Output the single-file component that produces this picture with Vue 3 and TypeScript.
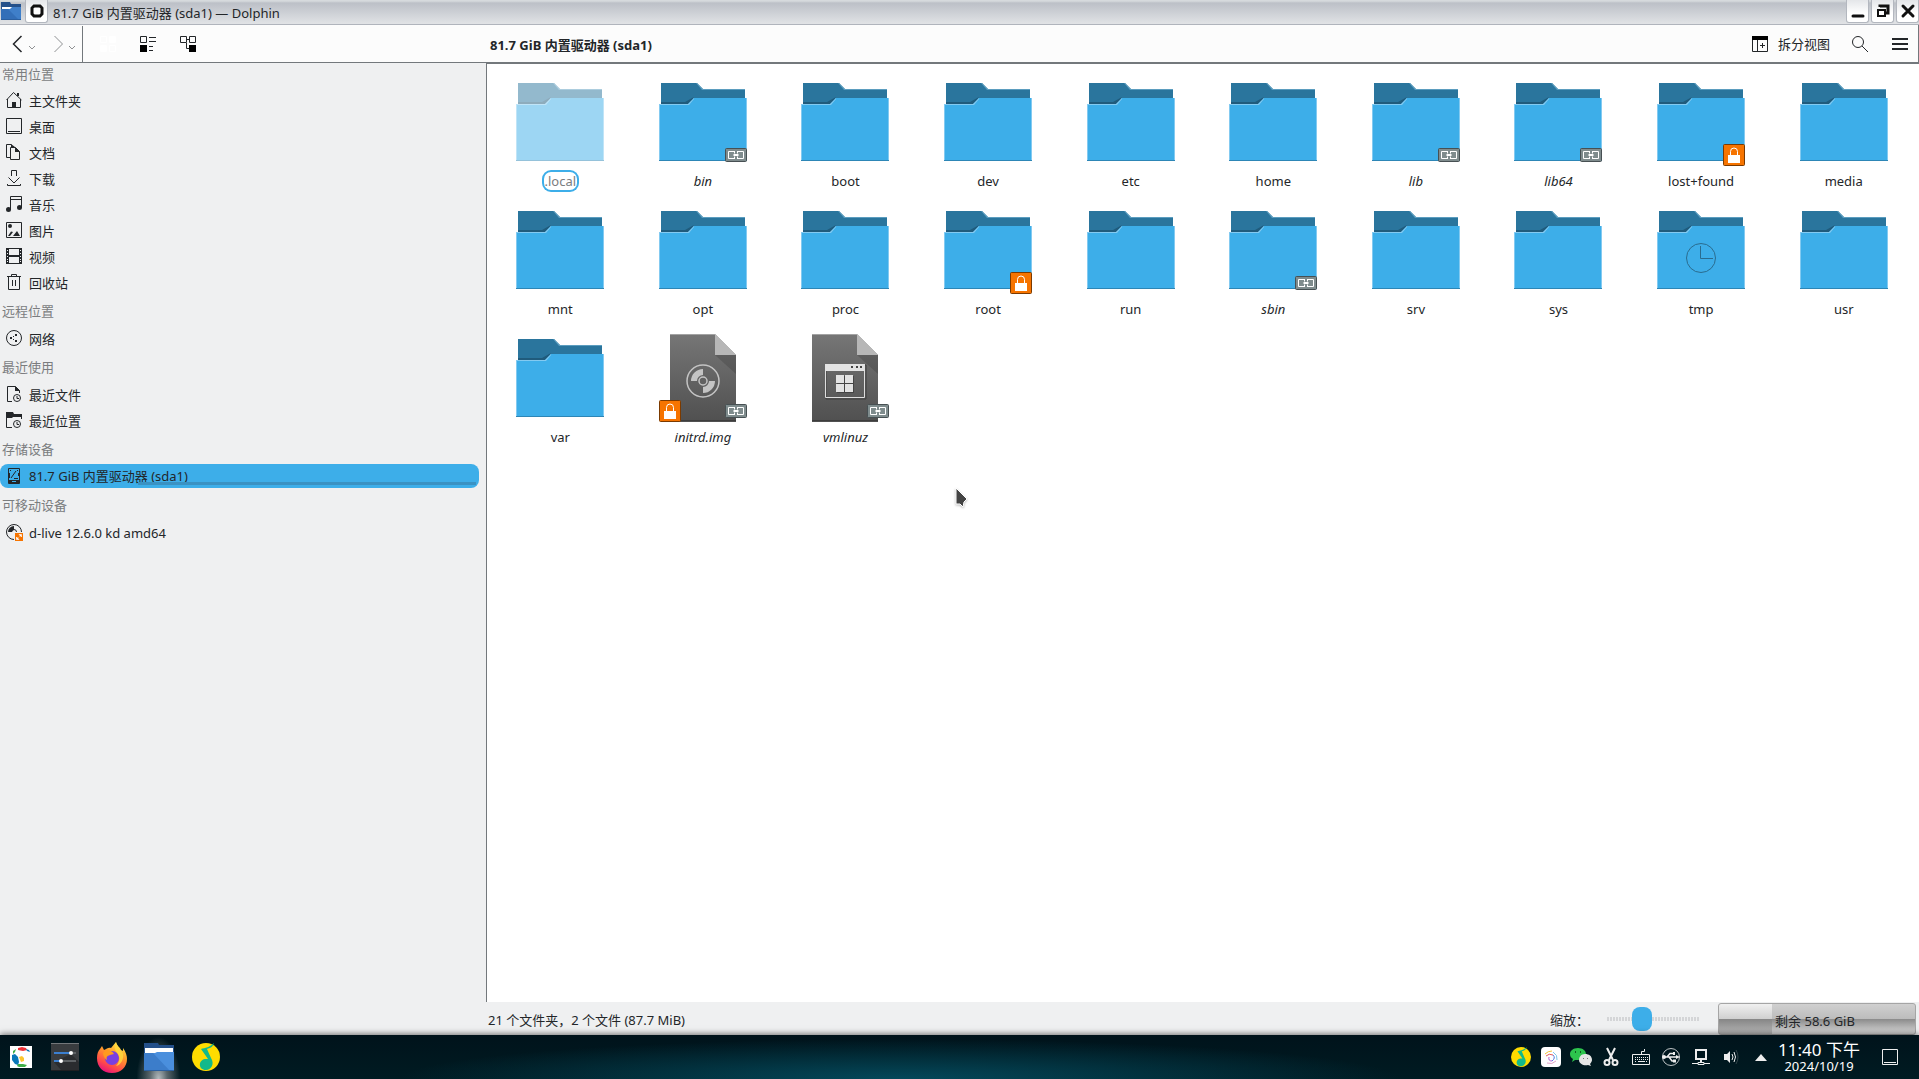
<script setup lang="ts">
import { ref } from 'vue'

interface Place {
  label: string
  stroke: string
  fill: string
  active?: boolean
  usage?: number
  mounted?: boolean
}
interface Section {
  title: string
  places: Place[]
}
interface Entry {
  name: string
  kind?: 'folder' | 'disc' | 'app'
  link?: boolean
  lock?: boolean
  hidden?: boolean
  clock?: boolean
}

const zoomLevel = ref(35)

const clockBadge = 'M7.5 12a3.5 3.5 0 1 0 7 0a3.5 3.5 0 1 0 -7 0M11 10v2.5h2'

const sections: Section[] = [
  {
    title: '常用位置',
    places: [
      { label: '主文件夹', stroke: 'M1.5 7V15.5H14.5V7M.5 8L7.5 .5L15.5 8', fill: 'M6 10h4v5H6zM11 1h2v3h-2z' },
      { label: '桌面', stroke: 'M.5 .5H15.5V15.5H.5zM2 13.5H14', fill: '' },
      { label: '文档', stroke: 'M4 13.5H.5V.5H5.5M4.5 3.5H9.5L13.5 7.5V15.5H4.5z', fill: 'M9 3v5h5zM5 0l4 3H5z' },
      { label: '下载', stroke: 'M5.5 6V.5H10.5V6M2.5 7.5L8 13L13.5 7.5M1.5 14V15.5H14.5V14', fill: '' },
      {
        label: '音乐',
        stroke: 'M4.5 14V.5H15.5V12M4.5 3.5H15.5',
        fill: 'M0 13.5a2.5 2.5 0 1 0 5 0a2.5 2.5 0 1 0 -5 0M11 11.5a2.5 2.5 0 1 0 5 0a2.5 2.5 0 1 0 -5 0',
      },
      {
        label: '图片',
        stroke: 'M.5 .5H15.5V15.5H.5z',
        fill: 'M2 4a2 2 0 1 0 4 0a2 2 0 1 0 -4 0M7 14l4-5l3 5zM2 14l3-4.5l2 .5l-3 4z',
      },
      {
        label: '视频',
        stroke: 'M.5 .5H15.5V15.5H.5z',
        fill: 'M0 0H3V16H0zM1 2v1h1v-1zM1 5v1h1v-1zM1 8v1h1v-1zM1 11v1h1v-1zM1 13v1h1v-1zM13 0H16V16H13zM14 2v1h1v-1zM14 5v1h1v-1zM14 8v1h1v-1zM14 11v1h1v-1zM14 13v1h1v-1zM3 7h10v2H3z',
      },
      { label: '回收站', stroke: 'M1 2.5H15M5.5 2.5V.5H10.5V2.5M2.5 2.5V15.5H13.5V2.5M6.5 6V12M9.5 6V12', fill: '' },
    ],
  },
  {
    title: '远程位置',
    places: [
      {
        label: '网络',
        stroke: 'M.5 8a7.5 7.5 0 1 0 15 0a7.5 7.5 0 1 0 -15 0',
        fill: 'M4 7h2v2H4zM9 4h2v2H9zM9 10h2v2H9zM7 6h1v1H7zM7 9h1v1H7z',
      },
    ],
  },
  {
    title: '最近使用',
    places: [
      { label: '最近文件', stroke: 'M6 15.5H1.5V.5H9.5L13.5 4.5V7' + clockBadge, fill: 'M9 0v5h5z' },
      { label: '最近位置', stroke: 'M.5 5V15.5H6M15.5 4V7' + clockBadge, fill: 'M0 0H7L8 2H16V5H7L6 6H0z' },
    ],
  },
  {
    title: '存储设备',
    places: [
      {
        label: '81.7 GiB 内置驱动器 (sda1)',
        stroke: 'M2.5 .5H13.5V15.5H2.5zM5 10L10 3M8 10.5h4M4 2.5h1M11 2.5h1',
        fill: 'M3 12h10v4H3zM6 13v1h4v-1zM3 5h1v5H3zM12 5h1v3h-1z',
        active: true,
        usage: 28,
      },
    ],
  },
  {
    title: '可移动设备',
    places: [
      {
        label: 'd-live 12.6.0 kd amd64',
        stroke: 'M8 15.5A7.5 7.5 0 1 1 15.5 8M5.5 8a2.5 2.5 0 1 1 5 0',
        fill: 'M2 8A6 6 0 0 1 8 2V6A2 2 0 0 0 6 8z',
        mounted: true,
      },
    ],
  },
]

const entries: Entry[] = [
  { name: '.local', hidden: true },
  { name: 'bin', link: true },
  { name: 'boot' },
  { name: 'dev' },
  { name: 'etc' },
  { name: 'home' },
  { name: 'lib', link: true },
  { name: 'lib64', link: true },
  { name: 'lost+found', lock: true },
  { name: 'media' },
  { name: 'mnt' },
  { name: 'opt' },
  { name: 'proc' },
  { name: 'root', lock: true },
  { name: 'run' },
  { name: 'sbin', link: true },
  { name: 'srv' },
  { name: 'sys' },
  { name: 'tmp', clock: true },
  { name: 'usr' },
  { name: 'var' },
  { name: 'initrd.img', kind: 'disc', link: true, lock: true },
  { name: 'vmlinuz', kind: 'app', link: true },
]
</script>

<template>
  <div class="screen">
    <header class="titlebar">
      <svg class="app-icon" width="20" height="20" viewBox="0 0 20 20">
        <path d="M0 1H9L10 3H20V9H0z" fill="#24508a" />
        <path d="M1 6H19V9H1z" fill="#fff" />
        <path d="M0 8H9L11 6L20 6V19H0z" fill="#3f7fc9" />
        <path d="M0 8H7L18 19H0z" fill="#336fb8" />
        <path d="M0 18H20V19H0z" fill="#2b5f9f" />
      </svg>
      <button class="win-btn" aria-label="窗口菜单">
        <svg width="16" height="16" viewBox="0 0 16 16">
          <path d="M5 3H11L13 5V11L11 13H5L3 11V5z" fill="#fff" stroke="#111" stroke-width="3" />
        </svg>
      </button>
      <h1>81.7 GiB 内置驱动器 (sda1) — Dolphin</h1>
      <div class="win-controls">
        <button class="win-btn" aria-label="最小化">
          <svg width="16" height="16" viewBox="0 0 16 16"><path d="M3 13H13" stroke="#111" stroke-width="3" stroke-linecap="round" /></svg>
        </button>
        <button class="win-btn" aria-label="还原">
          <svg width="16" height="16" viewBox="0 0 16 16" fill="none" stroke="#111">
            <path d="M5 4V3H13V10H11" stroke-width="3" />
            <path d="M3 7H10V13H3z" stroke-width="2" />
          </svg>
        </button>
        <button class="win-btn" aria-label="关闭">
          <svg width="16" height="16" viewBox="0 0 16 16"><path d="M3 3L13 13M13 3L3 13" stroke="#111" stroke-width="3" stroke-linecap="round" /></svg>
        </button>
      </div>
    </header>

    <nav class="toolbar">
      <div class="history">
        <button class="tool" aria-label="后退">
          <svg width="24" height="16" viewBox="0 0 24 16">
            <path d="M9.500 0L1.500 8L9.500 16" class="line" /><path d="M17 10L20 13L23 10" class="faint" />
          </svg>
        </button>
        <button class="tool" aria-label="前进">
          <svg width="24" height="16" viewBox="0 0 24 16">
            <path d="M2.500 0L10.500 8L2.500 16" class="faint" /><path d="M17 10L20 13L23 10" class="faint" />
          </svg>
        </button>
      </div>
      <div class="modes">
        <button class="tool" aria-label="图标">
          <svg width="16" height="16" viewBox="0 0 16 16" fill="#fff" stroke="#fff">
            <path d="M.5 .5h6v6h-6zM9.500 9.500h6v6h-6z" fill="none" /><path d="M9.500 .5h6v6h-6zM.5 9.500h6v6h-6z" />
          </svg>
        </button>
        <button class="tool" aria-label="紧凑">
          <svg width="16" height="16" viewBox="0 0 16 16">
            <path d="M.5 .5h6v6h-6zM9 1.500h7M9 5.500h7M9 10.500h4M9 14.500h4" class="line" /><path d="M0 9h7v7H0z" />
          </svg>
        </button>
        <button class="tool" aria-label="详情">
          <svg width="16" height="16" viewBox="0 0 16 16">
            <path d="M.5 .5h6v6h-6zM9.500 .5h6v6h-6zM7 3.500h2M6.500 7V12.500H9" class="line" /><path d="M9 9h7v7H9z" />
          </svg>
        </button>
      </div>
      <strong class="crumb">81.7 GiB 内置驱动器 (sda1)</strong>
      <div class="actions">
        <button class="tool split">
          <svg width="16" height="16" viewBox="0 0 16 16">
            <path d="M.5 .5h15v15H.5zM5.500 4V15M8 9.500h5M10.500 7v5" class="line" /><path d="M0 0h16v4H0z" />
          </svg>
          <span>拆分视图</span>
        </button>
        <button class="tool" aria-label="搜索">
          <svg width="16" height="16" viewBox="0 0 16 16"><circle cx="6" cy="6" r="5.500" class="line" /><path d="M10 10L16 16" class="line" /></svg>
        </button>
        <button class="tool" aria-label="菜单">
          <svg width="16" height="16" viewBox="0 0 16 16"><path d="M0 2h16v2H0zM0 7h16v2H0zM0 12h16v2H0z" fill="#232629" /></svg>
        </button>
      </div>
    </nav>

    <div class="body">
      <aside class="places">
        <section v-for="s in sections" :key="s.title">
          <h2>{{ s.title }}</h2>
          <ul>
            <li v-for="p in s.places" :key="p.label">
              <a href="#" class="place" :class="{ active: p.active }">
                <svg width="16" height="16" viewBox="0 0 16 16">
                  <path :d="p.stroke" class="line" />
                  <path :d="p.fill" fill="#232629" fill-rule="evenodd" />
                  <g v-if="p.mounted">
                    <path d="M9 9h8v8H9z" fill="#f67400" />
                    <path d="M11 15l1.500-1.500M13.500 12.500L15 11M10.500 13v2.500H13zM13 10.500h2.500V13z" stroke="#fff" fill="#fff" stroke-width=".6" />
                  </g>
                </svg>
                <span>{{ p.label }}</span>
                <i v-if="p.usage" class="usage" :style="{ '--used': p.usage + '%' }"></i>
              </a>
            </li>
          </ul>
        </section>
      </aside>

      <div class="content">
        <main class="view">
          <figure v-for="e in entries" :key="e.name" class="entry" :class="{ dim: e.hidden, link: e.link }">
            <svg width="96" height="96" viewBox="0 0 96 96">
              <g v-if="!e.kind" class="folder">
                <path d="M6 9H42L48 15H90V40H6z" fill="#2a759d" />
                <path d="M42 9L48 15H90V16H47L41 9z" fill="#5b9dbf" />
                <path d="M6 28H30L39 23L34 30H6z" fill="#205b7c" />
                <path d="M4 30H33L39 24H92V87H4z" fill="#3daee9" />
                <path d="M4 30H33L39 24V25L34 31H5V86H4zM91 24H92V86H91z" fill="#83caf1" />
                <path d="M4 86H92V87H4z" fill="#2d86b6" />
                <g v-if="e.clock" fill="none" stroke="#2a6c8f"><circle cx="48" cy="56" r="14.500" /><path d="M47.500 44V56.500H60" /></g>
              </g>
              <g v-else>
                <path d="M15 4H60L81 25V92H15z" fill="url(#paper)" />
                <path d="M60 25H81V44z" fill="#000" opacity=".14" />
                <path d="M60 4L81 25H60z" fill="#b7b7b7" />
                <path d="M15 4H60V5H15z" fill="#a3a3a3" />
                <path d="M15 90H81V91H15z" fill="#3d3d3d" />
                <g v-if="e.kind === 'disc'" fill="none" stroke="#c4c4c4">
                  <circle cx="48" cy="51" r="16" stroke-width="1.500" />
                  <circle cx="48" cy="51" r="4" stroke-width="1.500" />
                  <path d="M39 51a9 9 0 0 1 9-9M57 51a9 9 0 0 1-9 9" stroke-width="6" />
                </g>
                <g v-else>
                  <path d="M29 35H69V69H29z" fill="none" stroke="#3f3f3f" />
                  <path d="M28.500 34.500H67.500V67.500H28.500z" fill="none" stroke="#dedede" />
                  <path d="M28 34H68V41H28z" fill="#e3e3e3" />
                  <path d="M54 36h2v2h-2zM59 36h2v2h-2zM63 36h2v2h-2z" fill="#444" />
                  <path d="M40 46h17v17H40z" fill="#454545" />
                  <path d="M39 45h8v8h-8zM48 45h8v8h-8zM39 54h8v8h-8zM48 54h8v8h-8z" fill="#e3e3e3" />
                </g>
              </g>
              <g v-if="e.lock" :transform="e.kind ? 'translate(4 70)' : 'translate(70 70)'">
                <rect x=".5" y=".5" width="21" height="21" rx="1" fill="#f67400" stroke="#7b3a00" />
                <path d="M7.500 11V7.500a3.500 3.500 0 0 1 7 0V11" fill="none" stroke="#fff" />
                <path d="M5 11h12v8H5z" fill="#fff" />
              </g>
              <g v-if="e.link" transform="translate(70 74)">
                <rect x=".5" y=".5" width="21" height="13" rx="1" fill="#7f8c8d" stroke="#475053" />
                <path d="M9 3.500H3.500V10.500H9M13 3.500H18.500V10.500H13M9.500 3V5M9.500 9V11M12.500 3V5M12.500 9V11" fill="none" stroke="#fff" />
                <path d="M8 7l2-2v1h2V5l2 2-2 2V8h-2v1z" fill="#fff" />
              </g>
            </svg>
            <figcaption><span>{{ e.name }}</span></figcaption>
          </figure>
          <svg class="pointer" width="14" height="22" viewBox="0 0 14 22">
            <path d="M1 1V17H5L8 20L9 15L12 12z" fill="#444" stroke="#fff" />
          </svg>
        </main>

        <footer class="status">
          <span class="summary">21 个文件夹，2 个文件 (87.7 MiB)</span>
          <label for="zoom">缩放：</label>
          <input id="zoom" v-model="zoomLevel" type="range" min="0" max="100" />
          <div class="capacity"><span>剩余 58.6 GiB</span></div>
        </footer>
      </div>
    </div>

    <div class="panel">
      <div class="launchers">
        <button class="task start" aria-label="启动器">
          <svg width="22" height="22" viewBox="0 0 22 22">
            <path d="M0 0h22v22H0z" fill="#fff" />
            <path d="M8 2l4-1 4 1 1 2-4 1-5-1z" fill="#ed3237" />
            <path d="M16 3l3 1 1 2-3-1z" fill="#0a77b8" />
            <path d="M3 5l3-2-1 3-2 2z" fill="#3fae49" />
            <path d="M2 9l3-1 3 3 1 5-1 3-3-1-3-4z" fill="#0a77b8" />
            <path d="M9 11l3-1 2 2v3l-3 1z" fill="#fcc62e" />
            <path d="M8 18l5 0 4 1-2 2-6 0-2-1z" fill="#3fae49" />
          </svg>
        </button>
        <button class="task" aria-label="系统设置">
          <svg width="28" height="28" viewBox="0 0 28 28">
            <path d="M0 0h28v28H0z" fill="#393c3f" /><path d="M0 0h28v1H0z" fill="#73777a" /><path d="M0 27h28v1H0z" fill="#1d1f21" />
            <path d="M3 19L20 11l8 8v8H10z" fill="#2a2c2f" />
            <path d="M3 9h17v2H3zM3 17h7v2H3z" fill="#3b7fd0" /><path d="M22 9h3v2h-3zM12 17h13v2H12z" fill="#5d6164" />
            <circle cx="20" cy="10" r="2" fill="#fff" /><circle cx="10" cy="18" r="2" fill="#fff" />
          </svg>
        </button>
        <button class="task" aria-label="Firefox">
          <svg width="30" height="31" viewBox="0 0 30 31">
            <path d="M19 0c1 4 4 5 5 8l2 1 0-3c3 4 4 8 4 11 0 8-6 14-15 14S0 25 0 16c0-4 1-7 3-9l2-3 2 4c3-1 4-3 7-2z" fill="url(#fox)" />
            <circle cx="15" cy="16" r="7" fill="#7a3fe0" />
            <path d="M9 8c4 0 6 1 8 4l-4 1c-3 1-4 2-3 5-2-1-4-4-4-7z" fill="#ff9a1f" />
            <path d="M19 0c1 5 5 7 7 12 1 5-2 11-7 12 4-4 4-9 2-12-2-3-5-6-2-12z" fill="#ffd83d" opacity=".85" />
          </svg>
        </button>
        <button class="task current" aria-label="Dolphin">
          <svg width="30" height="28" viewBox="0 0 30 28">
            <path d="M0 0H14L15 2H30V12H0z" fill="#24508a" />
            <path d="M1 5H29V12H1z" fill="#fff" />
            <path d="M0 10H11L13 9H30V28H0z" fill="#4a8fdd" />
            <path d="M0 10H9L26 28H0z" fill="#3c7dca" />
            <path d="M0 27H30V28H0z" fill="#2b5f9f" />
          </svg>
        </button>
        <button class="task" aria-label="QQ音乐">
          <svg width="28" height="28" viewBox="0 0 28 28">
            <circle cx="14" cy="14" r="14" fill="#ffdc00" />
            <path d="M22 0c-1 4-4 5-7 6l4 9c4 6 0 12-5 12-8 0-8-10-1-11h3L9 6c4-1 9-2 13-6z" fill="#12b98b" />
          </svg>
        </button>
      </div>

      <div class="tray">
        <button class="mini" aria-label="QQ音乐">
          <svg width="20" height="20" viewBox="0 0 28 28">
            <circle cx="14" cy="14" r="14" fill="#ffdc00" />
            <path d="M22 0c-1 4-4 5-7 6l4 9c4 6 0 12-5 12-8 0-8-10-1-11h3L9 6c4-1 9-2 13-6z" fill="#12b98b" />
          </svg>
        </button>
        <button class="mini" aria-label="输入法">
          <svg width="20" height="20" viewBox="0 0 20 20" fill="none">
            <rect width="20" height="20" rx="4" fill="#fff" />
            <path d="M4 7q3-3 7-3" stroke="#f3c536" /><path d="M12 5q5 3 4 8" stroke="#7ac6e9" /><path d="M15 14q-4 4-9 2" stroke="#e5a6ca" />
            <path d="M5 9q3-3 7-1" stroke="#e85b5b" /><path d="M12 8q3 3-1 6" stroke="#5778dd" /><path d="M11 14q-4 0-3-4" stroke="#b55cd6" />
          </svg>
        </button>
        <button class="mini" aria-label="微信">
          <svg width="22" height="20" viewBox="0 0 22 20">
            <path d="M8 1c5 0 8 3 8 6s-3 6-8 6l-3 0-3 2 1-3C1 11 0 9 0 7c0-3 3-6 8-6z" fill="#2dc44d" />
            <path d="M15 7c4 0 7 2 7 6 0 1-1 3-2 4l1 2-3-1c-4 1-9-1-9-5 0-3 2-6 6-6z" fill="#e6e6e6" />
            <path d="M5 4h1v2H5zM10 4h1v2h-1z" fill="#125c22" /><path d="M13 11h1v1h-1zM17 11h1v1h-1z" fill="#777" />
          </svg>
        </button>
        <button class="mini" aria-label="剪贴板">
          <svg width="16" height="18" viewBox="0 0 16 18" fill="none" stroke="#eee">
            <path d="M4 0L10 12M12 0L6 12" stroke-width="2" /><circle cx="4" cy="14.500" r="2.500" stroke-width="2" /><circle cx="12" cy="14.500" r="2.500" stroke-width="2" />
          </svg>
        </button>
        <button class="mini" aria-label="键盘">
          <svg width="18" height="18" viewBox="0 0 18 18" fill="none" stroke="#eee">
            <path d="M.5 6.500H17.500V16.500H.5zM9.500 6V3.500H12.500V1" /><path d="M3 9.500H16M3 11.500H16" stroke-dasharray="1 1" /><path d="M3 13.500h1M6 13.500h7M14 13.500h1" />
          </svg>
        </button>
        <button class="mini" aria-label="可移动设备">
          <svg width="18" height="18" viewBox="0 0 18 18" fill="none" stroke="#eee">
            <circle cx="9" cy="9" r="8.500" stroke-width=".8" /><path d="M1 9H15M5 9L8 5.500H11M7 9L10 13H12" stroke-width="1.500" />
            <path d="M0 9a2 2 0 1 0 4 0a2 2 0 1 0-4 0M11 4h2v3h-2zM11 11.500h3v3h-3zM14 7l4 2-4 2z" fill="#eee" stroke="none" />
          </svg>
        </button>
        <button class="mini" aria-label="网络">
          <svg width="18" height="18" viewBox="0 0 18 18" fill="none" stroke="#eee">
            <path d="M4 2H14V11H4z" stroke-width="2" /><path d="M9 12V15" stroke-width="2" /><path d="M0 15.500H6M12 15.500H18M6 14.500H12V16.500H6z" />
          </svg>
        </button>
        <button class="mini" aria-label="音量">
          <svg width="16" height="16" viewBox="0 0 16 16" fill="none" stroke="#eee">
            <path d="M1 5h3l3-3v12l-3-3H1z" fill="#eee" stroke="none" /><path d="M9 5q2 3 0 6" /><path d="M11 3q3 5 0 10" /><path d="M13 1q4 7 0 14" opacity=".2" />
          </svg>
        </button>
        <button class="mini" aria-label="显示隐藏的图标">
          <svg width="12" height="8" viewBox="0 0 12 8"><path d="M0 8L6 1L12 8z" fill="#eee" /></svg>
        </button>
        <div class="clock"><time class="hour">11:40 下午</time><time class="date">2024/10/19</time></div>
        <button class="mini" aria-label="显示桌面">
          <svg width="16" height="16" viewBox="0 0 16 16" fill="none" stroke="#eee"><path d="M.5 .5H15.500V15.500H.5zM2 13.500H14" /></svg>
        </button>
      </div>
    </div>

    <svg class="defs" width="0" height="0" aria-hidden="true">
      <linearGradient id="paper" x1="0" y1="0" x2="0" y2="1"><stop offset="0" stop-color="#767676" /><stop offset="1" stop-color="#505050" /></linearGradient>
      <linearGradient id="fox" x1=".8" y1="0" x2=".3" y2="1">
        <stop offset="0" stop-color="#fff04a" /><stop offset=".4" stop-color="#ff9a2a" /><stop offset=".75" stop-color="#ff4a4a" /><stop offset="1" stop-color="#e6107e" />
      </linearGradient>
    </svg>
  </div>
</template>

<style>
html,
body {
  background: #eff0f1;
}
</style>

<style scoped>
* {
  box-sizing: border-box;
}
.screen {
  display: flex;
  flex-direction: column;
  min-height: 100vh;
  font: 13px/22px 'Noto Sans', 'Noto Sans CJK SC', sans-serif;
  color: #232629;
  background: #eff0f1;
}
button {
  display: flex;
  align-items: center;
  justify-content: center;
  margin: 0;
  padding: 0;
  border: 0;
  background: none;
  font: inherit;
  color: inherit;
}
svg {
  display: block;
  flex: none;
  overflow: visible;
}
h1,
h2,
ul,
figure {
  margin: 0;
  padding: 0;
  font-size: inherit;
  font-weight: 400;
  list-style: none;
}
.line {
  fill: none;
  stroke: #232629;
}
.faint {
  fill: none;
  stroke: #8f9193;
}

.titlebar {
  display: flex;
  align-items: center;
  height: 25px;
  padding: 0 0 2px 1px;
  border-bottom: 1px solid #b0b4bc;
  background: linear-gradient(#d6dadd 0, #d6dadd 1px, #bcc0c7 3px, #e1e3e6 24px);
}
.win-btn {
  width: 23px;
  height: 23px;
  border: 1px solid #b3b7bf;
  border-top: 0;
  border-radius: 0 0 3px 3px;
  background: linear-gradient(#e4e6e9, #fff 60%);
}
.app-icon + .win-btn {
  margin-left: 4px;
}
.titlebar h1 {
  padding: 4px 0 0 5px;
}
.win-controls {
  display: flex;
  gap: 2px;
  margin-left: auto;
}

.toolbar {
  display: flex;
  align-items: center;
  height: 38px;
  border-bottom: 1px solid #73787c;
  border-right: 1px solid #73787c;
  background: #fcfcfc;
}
.history {
  display: flex;
  align-items: center;
  gap: 16px;
  width: 83px;
  height: 36px;
  padding-left: 12px;
  border-right: 1px solid #73787c;
}
.history .line {
  stroke-width: 1.5;
}
.modes {
  display: flex;
  gap: 24px;
  width: 407px;
  padding-left: 17px;
}
.crumb {
  padding-top: 2px;
}
.actions {
  display: flex;
  align-items: center;
  gap: 24px;
  margin-left: auto;
  padding-right: 10px;
}
.split {
  gap: 10px;
  margin-right: -2px;
}
.split span {
  padding-top: 1px;
}

.body {
  display: flex;
  flex: 1;
}
.places {
  width: 486px;
  flex: none;
}
.places h2 {
  height: 30px;
  padding: 4px 2px 0;
  color: #7b7d7f;
}
.places section:first-child h2 {
  height: 25px;
  padding-top: 0;
}
.places li {
  padding-bottom: 2px;
}
.place {
  position: relative;
  display: flex;
  align-items: center;
  gap: 7px;
  height: 24px;
  width: 479px;
  padding-left: 6px;
  border-radius: 8px;
  color: inherit;
  text-decoration: none;
}
.place:not(.active) span {
  padding-top: 2px;
}
.place.active {
  background: #3daee9;
}
.usage {
  position: absolute;
  left: 6px;
  right: 3px;
  bottom: 3px;
  height: 3px;
  background: linear-gradient(90deg, transparent var(--used), #3a92c3 var(--used));
}

.content {
  display: flex;
  flex: 1;
  flex-direction: column;
}
.view {
  position: relative;
  display: grid;
  flex: 1;
  grid-template-columns: repeat(10, 1fr);
  align-content: start;
  row-gap: 10px;
  padding: 10px 4px 10px 2px;
  border-top: 1px solid #73787c;
  border-left: 1px solid #73787c;
  background: #fff;
}
.entry {
  display: flex;
  flex-direction: column;
  align-items: center;
  text-align: center;
}
.entry.link figcaption {
  font-style: italic;
}
.dim .folder {
  opacity: .5;
}
.dim figcaption {
  padding: 0 3px;
  border-radius: 9px;
  box-shadow: inset 0 0 0 2px #3daee9;
  color: #7b7d7f;
}
.pointer {
  position: absolute;
  left: 468px;
  top: 423px;
  filter: drop-shadow(0 1px 1px #0004);
}

.status {
  display: flex;
  align-items: center;
  height: 33px;
  padding-right: 3px;
}
.summary {
  margin-right: auto;
  padding: 3px 0 0 2px;
}
.status label {
  padding-top: 3px;
}
.status input {
  appearance: none;
  width: 92px;
  height: 24px;
  margin: 0 19px 0 18px;
  background: repeating-linear-gradient(90deg, #d4d5d7 0 2px, transparent 2px 3px) 0 10px / 100% 4px no-repeat;
}
.status input::-webkit-slider-thumb {
  appearance: none;
  width: 20px;
  height: 24px;
  border: 0;
  border-radius: 8px;
  background: #3daee9;
}
.capacity {
  width: 198px;
  height: 32px;
  padding: 6px 4px 0 0;
  border: 1px solid #a5a5a5;
  border-radius: 3px;
  text-align: center;
  background: linear-gradient(#f0f0f0, #cfcfcf 50%, #858585 50%, #b8b8b8) 0 0 / 53px 100% no-repeat,
    linear-gradient(#d0d0d0, #bcbcbc 50%, #8a8a8a 50%, #dcdcdc);
}

.panel {
  position: relative;
  display: flex;
  align-items: center;
  justify-content: space-between;
  height: 44px;
  padding-right: 14px;
  background: radial-gradient(ellipse 500px 40px at 900px 44px, #04485a, transparent),
    linear-gradient(#00131b, #001b22);
  box-shadow: 0 -1px 6px #0008;
  color: #fff;
}
.launchers {
  display: flex;
  align-items: center;
}
.task {
  width: 47px;
  height: 44px;
}
.start {
  width: 41px;
}
.current {
  background: radial-gradient(ellipse 22px 42px at 50% 100%, #b5bcbf, #58656a 40%, transparent);
}
.tray {
  display: flex;
  align-items: center;
}
.mini {
  width: 30px;
  height: 30px;
}
.clock {
  display: flex;
  flex-direction: column;
  align-items: center;
  width: 86px;
  margin-right: 13px;
}
.hour {
  font-size: 17px;
  line-height: 18px;
}
.date {
  line-height: 14px;
}
.defs {
  position: absolute;
}
</style>
